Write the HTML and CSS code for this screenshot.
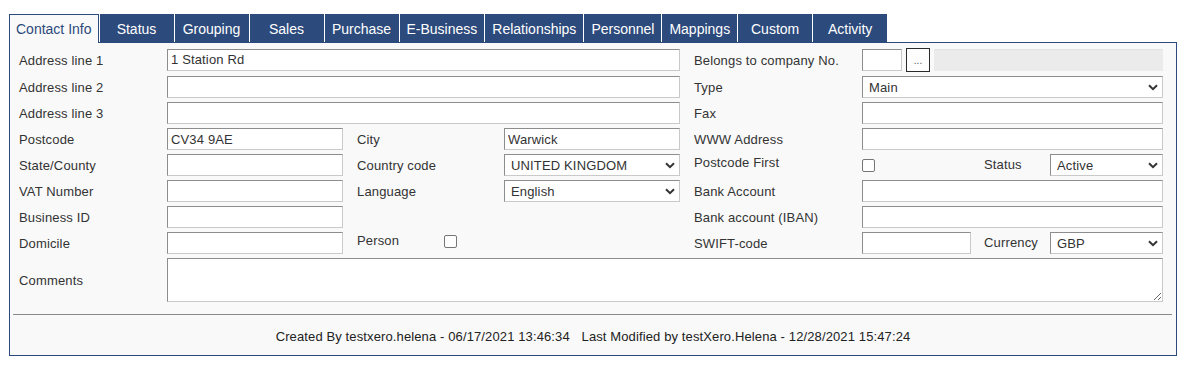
FILE: index.html
```html
<!DOCTYPE html>
<html lang="en">
<head>
  <meta charset="UTF-8" />
  <title>Contact Info</title>
  <link rel="stylesheet" href="styles.css">
</head>
<body>
  <div class="card-wrap">
    <div class="tabs">
      <button class="tab active">Contact Info</button>
      <button class="tab">Status</button>
      <button class="tab">Grouping</button>
      <button class="tab">Sales</button>
      <button class="tab">Purchase</button>
      <button class="tab">E-Business</button>
      <button class="tab">Relationships</button>
      <button class="tab">Personnel</button>
      <button class="tab">Mappings</button>
      <button class="tab">Custom</button>
      <button class="tab">Activity</button>
    </div>

    <div class="panel">
      <div class="form-grid">
        <!-- row 1 -->
        <label class="lbl">Address line 1</label>
        <input class="fld span3" type="text" value="1 Station Rd" />
        <label class="lbl gap">Belongs to company No.</label>
        <div class="company">
          <input class="fld company-no" type="text" />
          <button class="btn-pick">...</button>
          <div class="company-name"></div>
        </div>

        <!-- row 2 -->
        <label class="lbl">Address line 2</label>
        <input class="fld span3" type="text" />
        <label class="lbl gap">Type</label>
        <select class="fld sel"><option>Main</option></select>

        <!-- row 3 -->
        <label class="lbl">Address line 3</label>
        <input class="fld span3" type="text" />
        <label class="lbl gap">Fax</label>
        <input class="fld" type="text" />

        <!-- row 4 -->
        <label class="lbl">Postcode</label>
        <input class="fld" type="text" value="CV34 9AE" />
        <label class="lbl gap">City</label>
        <input class="fld" type="text" value="Warwick" />
        <label class="lbl gap">WWW Address</label>
        <input class="fld" type="text" />

        <!-- row 5 -->
        <label class="lbl">State/County</label>
        <input class="fld" type="text" />
        <label class="lbl gap">Country code</label>
        <select class="fld sel"><option>UNITED KINGDOM</option></select>
        <label class="lbl gap top">Postcode First</label>
        <div class="split">
          <input class="chk" type="checkbox" />
          <label class="lbl">Status</label>
          <select class="fld sel"><option>Active</option></select>
        </div>

        <!-- row 6 -->
        <label class="lbl">VAT Number</label>
        <input class="fld" type="text" />
        <label class="lbl gap">Language</label>
        <select class="fld sel"><option>English</option></select>
        <label class="lbl gap">Bank Account</label>
        <input class="fld" type="text" />

        <!-- row 7 -->
        <label class="lbl">Business ID</label>
        <input class="fld" type="text" />
        <span></span>
        <span></span>
        <label class="lbl gap">Bank account (IBAN)</label>
        <input class="fld" type="text" />

        <!-- row 8 -->
        <label class="lbl">Domicile</label>
        <input class="fld" type="text" />
        <div class="lbl gap top person">
          <span class="person-text">Person</span>
          <input class="chk" type="checkbox" />
        </div>
        <span></span>
        <label class="lbl gap">SWIFT-code</label>
        <div class="split">
          <input class="fld swift" type="text" />
          <label class="lbl">Currency</label>
          <select class="fld sel"><option>GBP</option></select>
        </div>

        <!-- row 9 -->
        <label class="lbl">Comments</label>
        <textarea class="fld comments"></textarea>
      </div>

      <div class="sep"></div>

      <div class="audit">
        <span>Created By testxero.helena - 06/17/2021 13:46:34</span>
        <span class="audit-mod">Last Modified by testXero.Helena - 12/28/2021 15:47:24</span>
      </div>
    </div>
  </div>
</body>
</html>
```

FILE: styles.css
```css
body {
  margin: 0;
  background: #ffffff;
  font-family: "Liberation Sans", Arial, sans-serif;
  color: #333333;
}

.card-wrap {
  padding: 14px 10px 0 9px;
}

/* tab strip */
.tabs {
  display: flex;
  gap: 1px;
}

.tab {
  flex: none;
  box-sizing: border-box;
  min-width: 74px;
  height: 28px;
  padding: 1px 7px 0;
  border: none;
  background: #2c4a7b;
  color: #ffffff;
  font-family: inherit;
  font-size: 14px;
  cursor: pointer;
}

.tab.active {
  height: 29px;
  margin-bottom: -1px;
  padding: 0 6px;
  border: 1px solid #2c4a7b;
  border-bottom: none;
  background: #f9f9f9;
  color: #2c4a7b;
  position: relative;
  z-index: 1;
}

/* main panel */
.panel {
  border: 1px solid #2c4a7b;
  background: #f9f9f9;
}

.form-grid {
  display: grid;
  grid-template-columns: 148px 176px 161px 176px 182px 301px;
  grid-template-rows: 25px repeat(7, 22px) 44px;
  row-gap: 4px;
  align-items: center;
  padding: 4px 13px 0 9px;
  font-size: 13px;
}

.lbl {
  box-sizing: border-box;
  padding-top: 2px;
  font-size: 13px;
  line-height: 16px;
  letter-spacing: 0.15px;
  color: #333333;
}

.lbl.gap {
  padding-left: 14px;
}

.lbl.top {
  align-self: start;
  padding-top: 1px;
}

.fld {
  box-sizing: border-box;
  height: 22px;
  margin: 0;
  padding: 0 3px;
  border: 1px solid;
  border-color: #8d8d8d #c9c9c9 #c9c9c9 #8d8d8d;
  border-radius: 0;
  background: #ffffff;
  color: #333333;
  font-family: inherit;
  font-size: 13px;
  letter-spacing: 0.15px;
}

.span3 {
  grid-column: span 3;
}

.sel {
  appearance: none;
  -webkit-appearance: none;
  padding-left: 6px;
  background-image: url("data:image/svg+xml;utf8,<svg xmlns='http://www.w3.org/2000/svg' width='10' height='7' viewBox='0 0 10 7'><path d='M1 1.2l4 4 4-4' fill='none' stroke='%23333' stroke-width='2'/></svg>");
  background-repeat: no-repeat;
  background-position: right 4px center;
}

.company {
  display: flex;
  align-items: center;
}

.company-no {
  width: 40px;
}

.btn-pick {
  box-sizing: border-box;
  width: 24px;
  height: 24px;
  margin: 0 4px;
  padding: 0;
  border: 1px solid #2b2b2b;
  background: #fdfdfd;
  color: #555555;
  font-family: inherit;
  font-size: 10px;
  line-height: 24px;
}

.company-name {
  flex: 1;
  height: 22px;
  box-sizing: border-box;
  background: #ebebeb;
  border-top: 1px solid #e2e2e2;
}

.split {
  display: grid;
  grid-template-columns: 122px 66px 113px;
  align-items: center;
}

.split .lbl {
  padding-top: 0;
}

.swift {
  width: 109px;
}

.chk {
  appearance: none;
  -webkit-appearance: none;
  box-sizing: border-box;
  width: 13px;
  height: 13px;
  margin: 0;
  border: 1px solid #767676;
  border-radius: 2px;
  background: #ffffff;
}

.person {
  display: flex;
  align-items: center;
}

.person-text {
  width: 87px;
}

.comments {
  grid-column: span 5;
  height: 44px;
  resize: both;
}

.sep {
  margin: 12px 4px 0 3px;
  border-top: 1px solid #8a8a8a;
}

.audit {
  padding: 14px 0 10px;
  text-align: center;
  font-size: 13px;
  line-height: 16px;
  letter-spacing: 0.12px;
  color: #222222;
}

.audit-mod {
  margin-left: 8px;
}
```
